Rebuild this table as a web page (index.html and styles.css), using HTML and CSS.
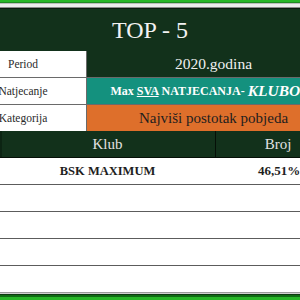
FILE: index.html
```html
<!DOCTYPE html>
<html lang="hr">
<head>
<meta charset="utf-8">
<title>TOP - 5</title>
<link rel="stylesheet" href="styles.css">
</head>
<body>
<div class="sheet">
  <div class="strip-top">
    <div class="g1"></div>
    <div class="g2"></div>
    <div class="s1"></div>
    <div class="s2"></div>
    <div class="s3"></div>
    <div class="s4"></div>
  </div>
  <div class="title">TOP - 5</div>
  <div class="info">
    <div class="info-row">
      <div class="label">Period</div>
      <div class="value v-dark">2020.godina</div>
    </div>
    <div class="info-row">
      <div class="label">Natjecanje</div>
      <div class="value v-teal"><span class="b">Max <u>SVA</u> NATJECANJA- </span><span class="klub">KLUBOVI</span></div>
    </div>
    <div class="info-row last">
      <div class="label">Kategorija</div>
      <div class="value v-orange">Najviši postotak pobjeda</div>
    </div>
  </div>
  <div class="thead">
    <div class="c-klub">Klub</div>
    <div class="c-broj">Broj</div>
  </div>
  <div class="rows">
    <div class="row"><div class="c-klub">BSK MAXIMUM</div><div class="c-broj">46,51%</div></div>
    <div class="row"><div class="c-klub"></div><div class="c-broj"></div></div>
    <div class="row"><div class="c-klub"></div><div class="c-broj"></div></div>
    <div class="row"><div class="c-klub"></div><div class="c-broj"></div></div>
    <div class="row last"><div class="c-klub"></div><div class="c-broj"></div></div>
  </div>
  <div class="strip-bottom">
    <div class="b1"></div>
    <div class="b2"></div>
    <div class="b3"></div>
    <div class="b4"></div>
  </div>
</div>
</body>
</html>
```
FILE: styles.css
```css
html, body {
  margin: 0;
  padding: 0;
  background: #ffffff;
}
body {
  width: 300px;
  height: 300px;
  overflow: hidden;
  font-family: "Liberation Serif", "DejaVu Serif", serif;
}
.sheet {
  width: 300px;
  display: flex;
  flex-direction: column;
}
.strip-top .g1 { height: 2px; background: #27b627; }
.strip-top .g2 { height: 1px; background: #1f8a22; }
.strip-top .s1 { height: 1px; background: #bdbdbd; }
.strip-top .s2 { height: 3px; background: #ececec; }
.strip-top .s3 { height: 1px; background: #8a8a8a; }
.strip-top .s4 { height: 1px; background: #0a1a0d; }

.title {
  height: 42px;
  background: #12311b;
  color: #f2f2f2;
  font-size: 24px;
  display: flex;
  align-items: center;
  justify-content: center;
}

.info {
  margin-left: -40px;
  width: 380px;
  display: flex;
  flex-direction: column;
}
.info-row {
  display: flex;
  height: 26px;
  border-bottom: 1px solid #6a6a6a;
}
.info-row.last {
  border-bottom: none;
}
.label {
  width: 126px;
  flex: none;
  background: #ffffff;
  border-right: 1px solid #6a6a6a;
  color: #2a2a2a;
  font-size: 11.5px;
  display: flex;
  align-items: center;
  justify-content: center;
}
.value {
  flex: 1;
  display: flex;
  align-items: center;
  justify-content: center;
  white-space: nowrap;
  overflow: visible;
}
.v-dark {
  background: #12311b;
  color: #f0f0f0;
  font-size: 15.5px;
}
.v-teal {
  background: #14917e;
  color: #ffffff;
}
.v-teal .b {
  font-weight: bold;
  font-size: 12px;
  white-space: pre;
}
.v-teal .klub {
  font-weight: bold;
  font-style: italic;
  font-size: 15.5px;
}
.v-orange {
  background: #de6f2b;
  color: #1e1e1e;
  font-size: 15px;
}

.thead {
  display: flex;
  width: 341px;
  height: 26px;
  background: #12311b;
  color: #e2e2e2;
  font-size: 15px;
  border-bottom: 1px solid #050f07;
  box-shadow: inset 2px 0 0 #0c2413;
}
.thead .c-klub,
.row .c-klub {
  width: 215px;
  flex: none;
  display: flex;
  align-items: center;
  justify-content: center;
}
.thead .c-klub {
  border-right: 1px solid #050f07;
}
.thead .c-broj,
.row .c-broj {
  width: 124px;
  flex: none;
  display: flex;
  align-items: center;
  justify-content: center;
}
.rows {
  display: flex;
  flex-direction: column;
}
.row {
  display: flex;
  width: 341px;
  height: 26px;
  border-bottom: 1px solid #5c5c5c;
  color: #1e1e1e;
  font-weight: bold;
  font-size: 12.5px;
}
.row .c-broj {
  font-size: 13px;
  padding-left: 2px;
}
.row.last {
  border-bottom: none;
}
.strip-bottom .b1 { height: 1px; background: #9a9a9a; }
.strip-bottom .b2 { height: 1px; background: #d0d0d0; }
.strip-bottom .b3 { height: 1px; background: #0b3a0e; }
.strip-bottom .b4 { height: 2px; background: #106a14; }
.strip-bottom::after {
  content: "";
  display: block;
  height: 4px;
  background: #27b627;
}
```
